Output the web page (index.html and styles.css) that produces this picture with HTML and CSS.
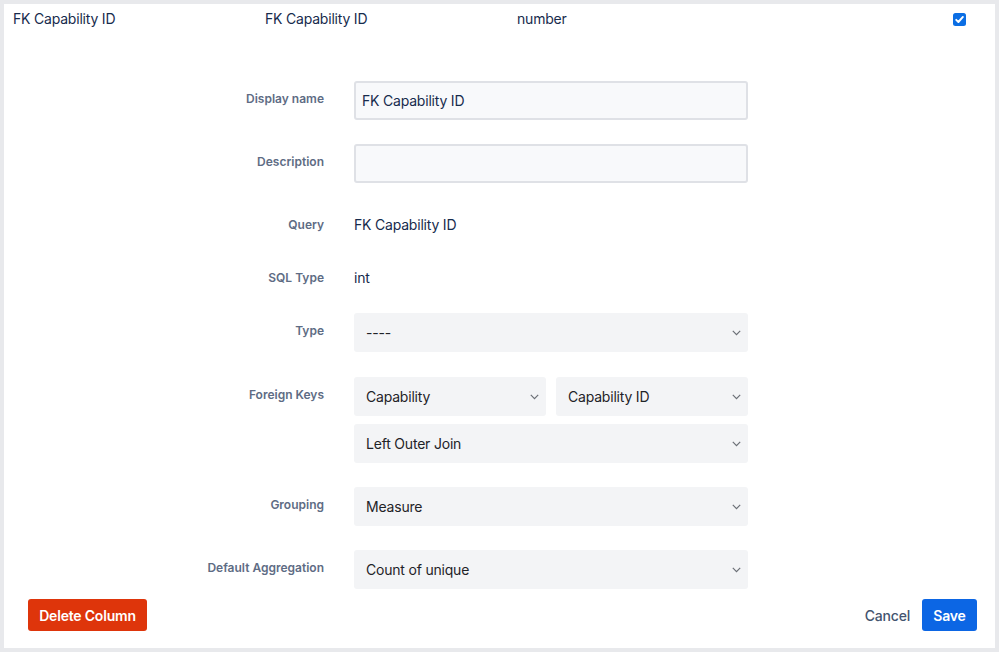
FILE: index.html
```html
<!DOCTYPE html>
<html>
<head>
<meta charset="utf-8">
<link rel="stylesheet" href="styles.css">
</head>
<body>
<div class="panel">
  <div class="header">
    <div class="hcol">FK Capability ID</div>
    <div class="hcol">FK Capability ID</div>
    <div class="hcol">number</div>
    <div class="hcheck">
      <svg width="13" height="13" viewBox="0 0 13 13"><rect x="0" y="0" width="13" height="13" rx="2.5" fill="#0b6ee4"/><path d="M3.2 6.8 L5.4 9 L9.9 3.9" fill="none" stroke="#fff" stroke-width="1.9" stroke-linecap="round" stroke-linejoin="round"/></svg>
    </div>
  </div>

  <div class="form">
    <div class="row r-input">
      <div class="label">Display name</div>
      <div class="field"><div class="input">FK Capability ID</div></div>
    </div>
    <div class="row r-input">
      <div class="label">Description</div>
      <div class="field"><div class="input"></div></div>
    </div>
    <div class="row r-query">
      <div class="label">Query</div>
      <div class="field text">FK Capability ID</div>
    </div>
    <div class="row r-sql">
      <div class="label">SQL Type</div>
      <div class="field text">int</div>
    </div>
    <div class="row r-type">
      <div class="label">Type</div>
      <div class="field">
        <div class="select"><span>----</span><svg class="chev" width="9" height="6" viewBox="0 0 9 6"><path d="M0.8 0.9 L4.5 4.6 L8.2 0.9" fill="none" stroke="#6b6f76" stroke-width="1.2"/></svg></div>
      </div>
    </div>
    <div class="row r-fk">
      <div class="label">Foreign Keys</div>
      <div class="field fk">
        <div class="fkpair">
          <div class="select"><span>Capability</span><svg class="chev" width="9" height="6" viewBox="0 0 9 6"><path d="M0.8 0.9 L4.5 4.6 L8.2 0.9" fill="none" stroke="#6b6f76" stroke-width="1.2"/></svg></div>
          <div class="select"><span>Capability ID</span><svg class="chev" width="9" height="6" viewBox="0 0 9 6"><path d="M0.8 0.9 L4.5 4.6 L8.2 0.9" fill="none" stroke="#6b6f76" stroke-width="1.2"/></svg></div>
        </div>
        <div class="select"><span>Left Outer Join</span><svg class="chev" width="9" height="6" viewBox="0 0 9 6"><path d="M0.8 0.9 L4.5 4.6 L8.2 0.9" fill="none" stroke="#6b6f76" stroke-width="1.2"/></svg></div>
      </div>
    </div>
    <div class="row r-group">
      <div class="label">Grouping</div>
      <div class="field">
        <div class="select"><span>Measure</span><svg class="chev" width="9" height="6" viewBox="0 0 9 6"><path d="M0.8 0.9 L4.5 4.6 L8.2 0.9" fill="none" stroke="#6b6f76" stroke-width="1.2"/></svg></div>
      </div>
    </div>
    <div class="row r-agg">
      <div class="label">Default Aggregation</div>
      <div class="field">
        <div class="select"><span>Count of unique</span><svg class="chev" width="9" height="6" viewBox="0 0 9 6"><path d="M0.8 0.9 L4.5 4.6 L8.2 0.9" fill="none" stroke="#6b6f76" stroke-width="1.2"/></svg></div>
      </div>
    </div>
  </div>

  <div class="footer">
    <button class="btn btn-danger">Delete Column</button>
    <div class="actions">
      <button class="btn-link">Cancel</button>
      <button class="btn btn-primary">Save</button>
    </div>
  </div>
</div>
</body>
</html>
```

FILE: styles.css
```css
html, body {
  margin: 0;
  padding: 0;
  background: #e8e9ec;
}
body {
  padding: 4px;
  width: 999px;
  height: 652px;
  box-sizing: border-box;
  font-family: Inter, "Noto Sans", "Liberation Sans", sans-serif;
  color: #172b4d;
  font-size: 14px;
  letter-spacing: -0.2px;
}
.panel {
  background: #fff;
  width: 991px;
  height: 644px;
  box-sizing: border-box;
  display: flex;
  flex-direction: column;
}
.header {
  display: flex;
  align-items: center;
  height: 30px;
  padding-left: 9px;
  padding-right: 29px;
}
.hcol {
  width: 252px;
  line-height: 20px;
}
.hcheck {
  margin-left: auto;
  height: 13px;
}
.hcheck svg { display: block; }

.form {
  margin-top: 47px;
  display: flex;
  flex-direction: column;
}
.row {
  display: grid;
  grid-template-columns: 320px 394px;
  column-gap: 30px;
}
.label {
  text-align: right;
  font-size: 12px;
  font-weight: 600;
  color: #5e6c84;
  line-height: 20px;
  padding-top: 8px;
  letter-spacing: 0;
}
.r-input + .r-input { margin-top: 24px; }
.r-query { margin-top: 27px; height: 30px; align-items: center; }
.r-query .label, .r-sql .label { padding-top: 0; }
.r-sql { margin-top: 25px; height: 26px; align-items: center; }
.r-type { margin-top: 22px; }
.r-fk { margin-top: 25px; }
.r-group { margin-top: 24px; }
.r-agg { margin-top: 24px; }
.text {
  line-height: 20px;
}
.input {
  height: 39px;
  box-sizing: border-box;
  border: 2px solid #dfe1e6;
  border-radius: 3px;
  background: #f8f9fb;
  padding: 0 6px;
  line-height: 35px;
}
.select {
  height: 39px;
  box-sizing: border-box;
  background: #f3f4f6;
  border-radius: 3px;
  padding: 0 7px 0 12px;
  display: flex;
  align-items: center;
  justify-content: space-between;
  color: #1f2328;
}
.chev { display: block; }
.fk {
  display: flex;
  flex-direction: column;
  gap: 8px;
}
.fkpair {
  display: grid;
  grid-template-columns: 1fr 1fr;
  column-gap: 10px;
}
.footer {
  margin-top: 10px;
  display: flex;
  justify-content: space-between;
  align-items: center;
  padding: 0 18px 0 24px;
}
.actions {
  display: flex;
  align-items: center;
  gap: 12px;
}
.btn {
  font-family: inherit;
  font-size: 14px;
  font-weight: 600;
  letter-spacing: -0.2px;
  height: 32px;
  border: none;
  border-radius: 3px;
  color: #fff;
  padding: 0;
  white-space: nowrap;
  cursor: pointer;
}
.btn-danger { background: #de350b; width: 119px; }
.btn-primary { background: #0c66e4; width: 55px; }
.btn-link {
  font-family: inherit;
  font-size: 14px;
  font-weight: 500;
  letter-spacing: -0.2px;
  background: none;
  border: none;
  color: #44546f;
  padding: 0;
}
```
